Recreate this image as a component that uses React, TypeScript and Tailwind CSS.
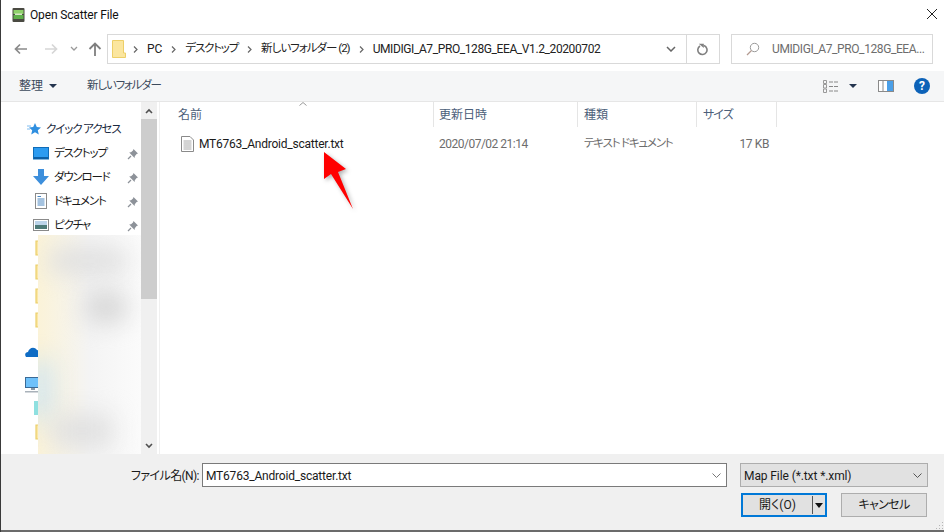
import React from "react";

function Pin() {
  return (
    <svg width="12" height="12" viewBox="0 0 12 12" className="mt-[2px] shrink-0">
      <path d="M6.5 1 L11 5.5 L9.6 6 L7.8 8.2 L7.6 10 L2.2 4.6 L4 4.3 L6 2.4 Z" fill="#8d9299" />
      <path d="M4 8 L1 11" stroke="#8d9299" strokeWidth="1.2" />
    </svg>
  );
}

function Folder() {
  return (
    <svg width="16" height="16" viewBox="0 0 16 16" className="shrink-0">
      <path d="M1 1 H16 V15 H1 Z" fill="#fbe7a5" stroke="#eccf6a" strokeWidth="1.2" />
    </svg>
  );
}

function Crumb() {
  return (
    <svg width="5" height="7" viewBox="0 0 5 7" className="mx-[9px] shrink-0">
      <path d="M1 0.5 L4 3.5 L1 6.5" fill="none" stroke="#666" strokeWidth="1.2" />
    </svg>
  );
}

function NavItem({ icon, label }: { icon: React.ReactNode; label: string }) {
  return (
    <div className="flex h-6 items-center pl-[32px] pr-[1px]">
      <div className="flex w-4 shrink-0 justify-center">{icon}</div>
      <span className="ml-[5px] flex-1 whitespace-nowrap pt-[2px] text-[11.5px] tracking-[-1.2px] text-[#1a1a1a]">{label}</span>
      <Pin />
    </div>
  );
}

function Header({ w, label, pl, extra }: { w: string; label: string; pl: string; extra?: string }) {
  return (
    <div className={`${w} ${pl} ${extra ?? ""} h-[25px] shrink-0 whitespace-nowrap border-r border-[#e5e5e5] text-[12px] leading-[26px] text-[#4c607a]`}>
      {label}
    </div>
  );
}

export default function App() {
  return (
    <div className="relative flex h-[532px] w-[944px] flex-col overflow-hidden border-l border-[#3a3a3a] bg-white [font-family:Roboto,'Noto_Sans_CJK_JP',sans-serif] [font-feature-settings:'palt']">
      {/* title */}
      <div className="flex h-[28px] shrink-0 items-center pl-[11px] pr-[5px] pt-[1px]">
        <svg width="13" height="14" viewBox="0 0 13 14" className="shrink-0">
          <rect x="0.5" y="0" width="12" height="14" rx="1" fill="#4a4a42" />
          <rect x="1.5" y="2" width="10" height="4" fill="#8ed16a" />
          <rect x="1.5" y="7" width="10" height="4" fill="#5fb04a" />
          <rect x="3" y="5.5" width="7" height="1.5" fill="#d8e8c8" />
        </svg>
        <span className="ml-[5px] flex-1 text-[12px] tracking-[-0.15px] text-[#111]">Open Scatter File</span>
        <svg width="12" height="12" viewBox="0 0 12 12" className="mb-[1px] mr-[1px] shrink-0">
          <path d="M1 1 L11 11 M11 1 L1 11" stroke="#222" strokeWidth="1" />
        </svg>
      </div>

      {/* nav row */}
      <div className="flex h-[43px] shrink-0 items-center pb-[1px] pl-[13px] pr-[1px]">
        <svg width="14" height="12" viewBox="0 0 14 12" className="shrink-0">
          <path d="M13 6 H2 M6 1.5 L1.5 6 L6 10.5" fill="none" stroke="#8a8a8a" strokeWidth="1.7" />
        </svg>
        <svg width="14" height="12" viewBox="0 0 14 12" className="ml-[16px] shrink-0">
          <path d="M1 6 H12 M8 1.5 L12.5 6 L8 10.5" fill="none" stroke="#d6d6d6" strokeWidth="1.7" />
        </svg>
        <svg width="8" height="6" viewBox="0 0 8 6" className="ml-[12px] shrink-0">
          <path d="M1 1 L4 4 L7 1" fill="none" stroke="#9a9a9a" strokeWidth="1.3" />
        </svg>
        <svg width="14" height="14" viewBox="0 0 14 14" className="ml-[10px] shrink-0">
          <path d="M7 14 V2 M1.5 7 L7 1.5 L12.5 7" fill="none" stroke="#7f7f7f" strokeWidth="1.8" />
        </svg>
        {/* address */}
        <div className="ml-[5px] flex h-[30px] w-[613px] shrink-0 items-center whitespace-nowrap border border-[#d9d9d9] text-[12px] text-[#222]">
          <svg width="14" height="18" viewBox="0 0 14 18" className="-mr-[2px] ml-[4px] shrink-0">
            <path d="M0.5 0.5 H11.5 V13 H13.5 V17.5 H0.5 Z" fill="#fbe69f" stroke="#edcf68" />
          </svg>
          <Crumb />
          <span>PC</span>
          <Crumb />
          <span className="text-[11.5px] tracking-[-1.2px]">デスクトップ</span>
          <Crumb />
          <span className="text-[11.5px] tracking-[-1px]">新しいフォルダー (2)</span>
          <Crumb />
          <span className="flex-1 tracking-[-0.4px]">UMIDIGI_A7_PRO_128G_EEA_V1.2_20200702</span>
          <svg width="10" height="6" viewBox="0 0 10 6" className="mr-[10px] shrink-0">
            <path d="M1 1 L5 5 L9 1" fill="none" stroke="#666" strokeWidth="1.5" />
          </svg>
          <div className="flex h-full w-[33px] shrink-0 items-center justify-center border-l border-[#d9d9d9]">
            <svg width="12" height="13" viewBox="0 0 12 13">
              <path d="M3 3 A4.6 4.6 0 1 0 7 2.6" fill="none" stroke="#808080" strokeWidth="1.6" />
              <path d="M1.8 0.8 L6.8 0.8 L6.8 5 Z" fill="#808080" />
            </svg>
          </div>
        </div>
        {/* search */}
        <div className="ml-[11px] flex h-[30px] w-[202px] shrink-0 items-center overflow-hidden border border-[#d9d9d9] text-[12px] text-[#6d6d6d]">
          <svg width="14" height="14" viewBox="0 0 14 14" className="ml-[14px] shrink-0">
            <circle cx="8.5" cy="5.5" r="4.2" fill="none" stroke="#9a9a9a" />
            <path d="M5.5 8.5 L1 13" stroke="#b39a90" strokeWidth="1.2" />
          </svg>
          <span className="ml-[12px] whitespace-nowrap tracking-[-0.4px]">UMIDIGI_A7_PRO_128G_EEA...</span>
        </div>
      </div>

      {/* toolbar */}
      <div className="flex h-[31px] shrink-0 items-center whitespace-nowrap border-b border-[#e6e6e6] bg-[#f5f6f7] pl-[18px] pr-[14px] text-[12px] text-[#3c4a5c]">
        <span>整理</span>
        <svg width="8" height="4" viewBox="0 0 8 4" className="ml-[6px]">
          <path d="M0 0 H8 L4 4 Z" fill="#24344f" />
        </svg>
        <span className="ml-[30px] flex-1 text-[11.5px] tracking-[-1.2px]">新しいフォルダー</span>
        <svg width="16" height="13" viewBox="0 0 16 13">
          <path d="M0.5 0.5 H3.5 V3.5 H0.5 Z M0.5 4.5 H3.5 V8 H0.5 Z M0.5 9 H3.5 V12.5 H0.5 Z" fill="none" stroke="#999" />
          <path d="M6 2 H16 M6 6.5 H16 M6 11 H16" stroke="#888" strokeDasharray="4 1" />
        </svg>
        <svg width="8" height="4" viewBox="0 0 8 4" className="ml-[10px]">
          <path d="M0 0 H8 L4 4 Z" fill="#24344f" />
        </svg>
        <svg width="16" height="13" viewBox="0 0 16 13" className="ml-[21px]">
          <rect x="0.5" y="0.5" width="15" height="11" fill="#fff" stroke="#8a8a8a" />
          <rect x="4.5" y="1" width="1" height="10" fill="#8a8a8a" />
          <rect x="9" y="1" width="6" height="10" fill="#4a9fe8" />
        </svg>
        <div className="ml-[20px] flex h-4 w-4 items-center justify-center rounded-full bg-[#0c62b8] text-[12px] font-bold text-white">
          ?
        </div>
      </div>

      {/* main */}
      <div className="flex min-h-0 flex-1">
        {/* sidebar */}
        <div className="relative flex w-[156px] shrink-0 overflow-hidden">
          <div className="w-[139px] shrink-0">
            <div className="mt-[15px] flex h-6 items-center whitespace-nowrap pl-[26px] text-[#1a2a40]">
              <svg width="14" height="14" viewBox="0 0 14 14" className="shrink-0">
                <path d="M8 1 L9.8 5 L14 5.4 L10.8 8.2 L11.8 12.6 L8 10.3 L4.2 12.6 L5.2 8.2 L2 5.4 L6.2 5 Z" fill="#2f8fe0" />
                <path d="M0 4 H4 M0 7 H3" stroke="#7fbcf0" />
              </svg>
              <span className="ml-[5px] pt-[2px] text-[11.5px] tracking-[-1.1px]">クイック アクセス</span>
            </div>
            <NavItem
              label="デスクトップ"
              icon={
                <svg width="16" height="13" viewBox="0 0 16 13">
                  <rect x="0.5" y="0.5" width="15" height="11.5" fill="#2c9bf0" stroke="#0f6cb8" />
                  <rect x="1" y="10" width="14" height="2" fill="#0c5fa5" />
                </svg>
              }
            />
            <NavItem
              label="ダウンロード"
              icon={
                <svg width="16" height="16" viewBox="0 0 16 16">
                  <path d="M5 0 H11 V7 H16 L8 16 L0 7 H5 Z" fill="#3d8fdc" />
                </svg>
              }
            />
            <NavItem
              label="ドキュメント"
              icon={
                <svg width="12" height="16" viewBox="0 0 12 16">
                  <rect x="0.5" y="0.5" width="11" height="15" fill="#fff" stroke="#8a8a8a" />
                  <path d="M2.5 3.5 H6 M2.5 6 H9.5 M2.5 8 H9.5 M2.5 10 H9.5 M2.5 12 H9.5" stroke="#4a86c0" />
                </svg>
              }
            />
            <NavItem
              label="ピクチャ"
              icon={
                <svg width="16" height="12" viewBox="0 0 16 12">
                  <rect x="0.5" y="0.5" width="15" height="11" fill="#fff" stroke="#8a8a8a" />
                  <rect x="2" y="2" width="12" height="4" fill="#bcd4ea" />
                  <rect x="2" y="6" width="12" height="4" fill="#4d7a78" />
                </svg>
              }
            />
            <div className="flex flex-col gap-2 pl-[34px] pt-[3px]">
              <Folder />
              <Folder />
              <Folder />
              <Folder />
            </div>
            <div className="flex flex-col pl-[24px] pt-[18px]">
              <svg width="16" height="12" viewBox="0 0 16 12">
                <path d="M1 11 C-1 8 1 6 3 6 C4 2 9 0 12 4 C15 4 16 8 15 11 Z" fill="#0f6cc4" />
              </svg>
              <svg width="16" height="16" viewBox="0 0 16 16" className="mt-[19px]">
                <rect x="0.5" y="0.5" width="15" height="10" fill="#6ec1fa" stroke="#3a6a96" />
                <rect x="6" y="11" width="4" height="2" fill="#8a9aa8" />
                <rect x="0" y="14" width="16" height="1.5" fill="#a9b2ba" />
              </svg>
              <div className="ml-[9px] mt-[8px] h-[14px] w-[6px] bg-[#8fe0e0]" />
              <div className="ml-[10px] mt-[9px]">
                <Folder />
              </div>
            </div>
          </div>
          {/* scrollbar */}
          <div className="ml-[1px] flex h-full w-[16px] shrink-0 flex-col bg-[#f0f0f0]">
            <div className="flex h-[17px] shrink-0 items-center justify-center">
              <svg width="8" height="6" viewBox="0 0 8 6">
                <path d="M1 5 L4 2 L7 5" fill="none" stroke="#505050" strokeWidth="1.6" />
              </svg>
            </div>
            <div className="h-[180px] shrink-0 bg-[#cdcdcd]" />
            <div className="flex-1" />
            <div className="flex h-[17px] shrink-0 items-center justify-center">
              <svg width="8" height="6" viewBox="0 0 8 6">
                <path d="M1 1 L4 4 L7 1" fill="none" stroke="#505050" strokeWidth="1.6" />
              </svg>
            </div>
          </div>
          {/* blurred overlay */}
          <div className="absolute left-[37px] top-[133px] h-[220px] w-[103px] overflow-hidden bg-gradient-to-r from-[#fbf3d8] via-[#f4f4f4] to-[#fbfbfb]">
            <div className="absolute left-[10px] top-[14px] h-6 w-[80px] rounded-full bg-[#dedede] blur-md" />
            <div className="absolute left-[46px] top-[56px] h-8 w-[44px] rounded-full bg-[#d6d6d6] blur-md" />
            <div className="absolute -left-2 top-[125px] h-[60px] w-[22px] bg-[#cfe4f2] blur-md" />
            <div className="absolute left-[14px] top-[180px] h-8 w-[60px] bg-[#e0e0e0] blur-md" />
          </div>
        </div>
        <div className="ml-[2px] w-px shrink-0 bg-[#f0f0f0]" />

        {/* files */}
        <div className="relative min-w-0 flex-1">
          <div className="flex">
            <Header w="w-[274px]" pl="pl-[18px]" label="名前" />
            <Header w="w-[144px]" pl="pl-[5px]" label="更新日時" />
            <Header w="w-[119px]" pl="pl-[6px]" label="種類" />
            <Header w="w-[80px]" pl="pl-[6px]" label="サイズ" extra="tracking-[-1px]" />
          </div>
          <svg width="8" height="4" viewBox="0 0 8 4" className="absolute left-[139px] top-0">
            <path d="M0.5 3.5 L4 0.5 L7.5 3.5" fill="none" stroke="#999" />
          </svg>
          <div className="mt-[4px] flex h-[26px] items-center whitespace-nowrap text-[12px] text-[#6d6d6d]">
            <div className="flex w-[274px] shrink-0 items-center pl-[21px]">
              <svg width="13" height="16" viewBox="0 0 13 16" className="shrink-0">
                <path d="M0.5 0.5 H9 L12.5 4 V15.5 H0.5 Z" fill="#fff" stroke="#8a8a8a" />
                <path d="M2.5 5 H10.5 M2.5 7 H10.5 M2.5 9 H10.5 M2.5 11 H10.5 M2.5 13 H10.5" stroke="#a8a8a8" />
              </svg>
              <span className="ml-[5px] tracking-[-0.23px] text-[#1a1a1a]">MT6763_Android_scatter.txt</span>
            </div>
            <div className="w-[144px] shrink-0 pl-[5px] tracking-[-0.5px]">2020/07/02 21:14</div>
            <div className="w-[119px] shrink-0 pl-[6px] text-[11.5px] tracking-[-1.2px]">テキスト ドキュメント</div>
            <div className="w-[72px] shrink-0 text-right tracking-[-0.4px]">17 KB</div>
          </div>
          {/* red arrow */}
          <svg width="36" height="60" viewBox="0 0 36 60" className="absolute left-[161px] top-[50px] drop-shadow-[2px_2px_2px_rgba(0,0,0,0.3)]">
            <path d="M3 0 L25 17 L17 20 L32 57 L10 22 L3 27 Z" fill="#ff0000" />
          </svg>
        </div>
      </div>

      {/* footer */}
      <div className="relative flex h-[78px] shrink-0 flex-col whitespace-nowrap border-b-2 border-[#6b6b6b] bg-[#f0f0f0] text-[12px] text-[#1a1a1a]">
        <div className="flex items-center pt-[9px]">
          <span className="ml-[130px] w-[71px] shrink-0 pt-[2px] tracking-[-0.6px]">ファイル名(N):</span>
          <div className="flex h-6 w-[525px] shrink-0 items-center border border-[#7a7a7a] bg-white pl-[3px]">
            <span className="flex-1 pt-[2px] tracking-[-0.2px]">MT6763_Android_scatter.txt</span>
            <svg width="9" height="5" viewBox="0 0 9 5" className="mr-[5px]">
              <path d="M0.5 0.5 L4.5 4.5 L8.5 0.5" fill="none" stroke="#777" />
            </svg>
          </div>
          <div className="ml-[13px] flex h-6 w-[188px] shrink-0 items-center border border-[#adadad] bg-[#e1e1e1] pl-[3px]">
            <span className="flex-1 pt-[2px] tracking-[-0.1px]">Map File (*.txt *.xml)</span>
            <svg width="9" height="5" viewBox="0 0 9 5" className="mr-[5px]">
              <path d="M0.5 0.5 L4.5 4.5 L8.5 0.5" fill="none" stroke="#555" />
            </svg>
          </div>
        </div>
        <div className="mt-[6px] flex pl-[740px]">
          <div className="flex h-6 w-[86px] shrink-0 items-center border-2 border-[#0078d7] bg-[#e1e1e1]">
            <span className="flex-1 text-center">開く(O)</span>
            <div className="h-[18px] w-px bg-[#555]" />
            <svg width="8" height="5" viewBox="0 0 8 5" className="mx-[2px]">
              <path d="M0 0 H8 L4 5 Z" fill="#111" />
            </svg>
          </div>
          <div className="ml-[14px] flex h-6 w-[86px] shrink-0 items-center justify-center border border-[#adadad] bg-[#e1e1e1] tracking-[-0.6px]">
            キャンセル
          </div>
        </div>
        <svg width="9" height="9" viewBox="0 0 9 9" className="absolute bottom-0 right-0">
          <path d="M7 1 h1 v1 h-1 Z M4 4 h1 v1 h-1 Z M7 4 h1 v1 h-1 Z M1 7 h1 v1 h-1 Z M4 7 h1 v1 h-1 Z M7 7 h1 v1 h-1 Z" fill="#b5b5b5" />
        </svg>
      </div>
    </div>
  );
}
